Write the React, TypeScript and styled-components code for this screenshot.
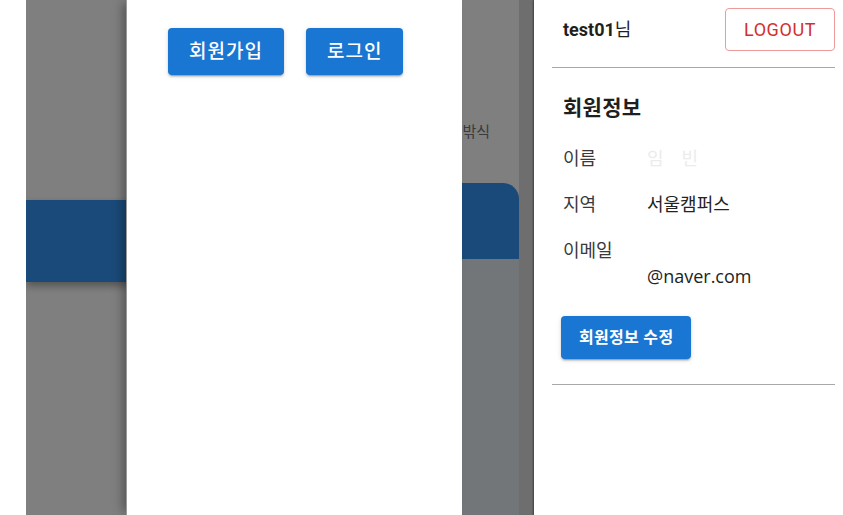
import React from "react";
import styled, { createGlobalStyle } from "styled-components";

const Global = createGlobalStyle`
  html, body { margin: 0; padding: 0; background: #fff; }
  body {
    font-family: Roboto, "Noto Sans CJK KR", sans-serif;
    overflow: hidden;
    -webkit-font-smoothing: antialiased;
  }
`;

const Screen = styled.div`
  display: flex;
  width: 843px;
  height: 515px;
  background: #fff;
`;

const Gutter = styled.div`
  flex: none;
  width: 26px;
`;

const Stage = styled.div`
  position: relative;
  flex: none;
  width: 508px;
  display: flex;
  overflow: hidden;
`;

const PageContent = styled.div`
  flex: 1;
  display: flex;
`;

const LeftCol = styled.div`
  flex: 1;
  padding-top: 200px;
`;

const Banner = styled.div`
  height: 82px;
  background: #3494f2;
  box-shadow: 0 4px 8px rgba(0, 0, 0, 0.35);
`;

const RightCol = styled.div`
  width: 220px;
  display: flex;
  flex-direction: column;
  padding-top: 122px;
`;

const Caption = styled.div`
  font-size: 15px;
  line-height: 20px;
  color: #767676;
  text-align: right;
  padding-right: 29px;
`;

const Card = styled.div`
  flex: 1;
  margin-top: 41px;
  display: flex;
  flex-direction: column;
  border-radius: 0 16px 0 0;
  overflow: hidden;
  background: #e6ecf2;
`;

const CardHead = styled.div`
  height: 76px;
  background: #3494f2;
`;

const Scrollbar = styled.div`
  flex: none;
  width: 14px;
  background: #dcdcdc;
  border-right: 1px solid #c4c4c4;
`;

const Backdrop = styled.div`
  position: absolute;
  inset: 0;
  background: rgba(0, 0, 0, 0.5);
  z-index: 1;
`;

const Drawer = styled.div`
  position: absolute;
  top: 0;
  bottom: 0;
  left: 100px;
  width: 336px;
  z-index: 2;
  background: #fff;
  border-left: 1px solid #9a9a9a;
  box-shadow: -6px 0 10px -3px rgba(0, 0, 0, 0.35);
  display: flex;
  align-items: flex-start;
  gap: 22px;
  padding: 28px 0 0 41px;
  box-sizing: border-box;
`;

const Contained = styled.button<{ $size?: "lg" | "md" }>`
  border: none;
  border-radius: 4px;
  background: #1976d2;
  color: #fff;
  font-family: Roboto, "Noto Sans CJK KR", sans-serif;
  font-size: ${(p) => (p.$size === "md" ? "16px" : "19px")};
  font-weight: ${(p) => (p.$size === "md" ? 700 : 500)};
  letter-spacing: ${(p) => (p.$size === "md" ? "0.3px" : "1px")};
  height: ${(p) => (p.$size === "md" ? "43px" : "47px")};
  padding: 0 ${(p) => (p.$size === "md" ? "18px" : "21px")};
  line-height: 1;
  cursor: pointer;
  box-shadow: 0px 3px 1px -2px rgba(0, 0, 0, 0.2),
    0px 2px 2px 0px rgba(0, 0, 0, 0.14), 0px 1px 5px 0px rgba(0, 0, 0, 0.12);
`;

const Panel = styled.div`
  flex: 1;
  background: #fff;
  box-shadow: -1px 0 2px rgba(0, 0, 0, 0.35);
  z-index: 3;
  padding: 8px 8px 0 18px;
  box-sizing: border-box;
  display: flex;
  flex-direction: column;
`;

const HeaderRow = styled.div`
  display: flex;
  align-items: center;
  justify-content: space-between;
  padding-left: 11px;
`;

const UserName = styled.div`
  font-size: 18px;
  line-height: 24px;
  color: #1f1f1f;
  b { font-weight: 700; }
`;

const Outlined = styled.button`
  height: 43px;
  width: 110px;
  border: 1px solid #ef9a9a;
  border-radius: 4px;
  background: #fff;
  color: #d32f2f;
  font-family: Roboto, "Noto Sans CJK KR", sans-serif;
  font-size: 18px;
  letter-spacing: 0.6px;
  font-weight: 400;
  cursor: pointer;
`;

const Divider = styled.hr<{ $top: number }>`
  margin: ${(p) => p.$top}px 0 0 0;
  border: none;
  border-top: 1px solid #a8a8a8;
  height: 0;
`;

const Info = styled.div`
  padding-left: 11px;
  display: flex;
  flex-direction: column;
  align-items: flex-start;
`;

const Title = styled.h2`
  margin: 26px 0 0 0;
  font-size: 21px;
  letter-spacing: 0.3px;
  line-height: 28px;
  font-weight: 700;
  color: #1f1f1f;
`;

const Rows = styled.dl`
  margin: 23px 0 0 0;
  display: flex;
  flex-direction: column;
  gap: 20px;
`;

const Row = styled.div`
  display: flex;
  font-family: "Open Sans", "Noto Sans CJK KR", sans-serif;
  font-size: 18px;
  line-height: 26px;
`;

const Label = styled.dt`
  width: 84px;
  color: #3a3a3a;
`;

const Value = styled.dd<{ $faint?: boolean }>`
  margin: 0;
  color: ${(p) => (p.$faint ? "#ececec" : "#232323")};
`;

const Hidden = styled.span`
  color: #fff;
`;

const EditWrap = styled.div`
  margin: 27px 0 0 -2px;
`;

export default function App() {
  return (
    <>
      <Global />
      <Screen>
        <Gutter />
        <Stage>
          <PageContent>
            <LeftCol>
              <Banner />
            </LeftCol>
            <RightCol>
              <Caption>밖식</Caption>
              <Card>
                <CardHead />
              </Card>
            </RightCol>
          </PageContent>
          <Scrollbar />
          <Backdrop />
          <Drawer>
            <Contained>회원가입</Contained>
            <Contained>로그인</Contained>
          </Drawer>
        </Stage>
        <Panel>
          <HeaderRow>
            <UserName>
              <b>test01</b>님
            </UserName>
            <Outlined>LOGOUT</Outlined>
          </HeaderRow>
          <Divider $top={16} />
          <Info>
            <Title>회원정보</Title>
            <Rows>
              <Row>
                <Label>이름</Label>
                <Value $faint>임　빈</Value>
              </Row>
              <Row>
                <Label>지역</Label>
                <Value>서울캠퍼스</Value>
              </Row>
              <Row>
                <Label>이메일</Label>
                <Value>
                  <Hidden>test01</Hidden>
                  <br />
                  @naver.com
                </Value>
              </Row>
            </Rows>
            <EditWrap>
              <Contained $size="md">회원정보 수정</Contained>
            </EditWrap>
          </Info>
          <Divider $top={25} />
        </Panel>
      </Screen>
    </>
  );
}
